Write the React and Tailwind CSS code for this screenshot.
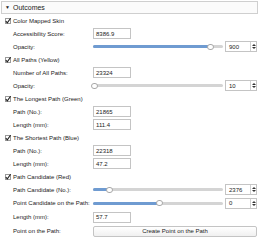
import React from 'react';

const font = { fontFamily: '"Liberation Sans", Arial, sans-serif' };

const Check = ({ label }) => (
  <div className="flex h-[13px] items-center pl-[5px]">
    <span className="flex h-[6px] w-[6px] items-center justify-center border border-[#9a9a9a] bg-white">
      <svg width="6" height="6" viewBox="0 0 6 6" className="overflow-visible">
        <path d="M0.8 3.2 L2.3 4.8 L5.6 0.2" fill="none" stroke="#222" strokeWidth="1.1" />
      </svg>
    </span>
    <span className="ml-[2px] whitespace-nowrap">{label}</span>
  </div>
);

const Row = ({ label, tall, children }) => (
  <div className={`flex items-center pl-[13px] pr-[2px] ${tall ? 'h-[14px]' : 'h-[13px]'}`}>
    <div className="w-[80px] shrink-0 whitespace-nowrap">{label}</div>
    {children}
  </div>
);

const Field = ({ value }) => (
  <div className="flex h-[11px] w-[38px] items-center border border-[#c4c4c4] bg-white px-[2px]">{value}</div>
);

const Slider = ({ pct }) => (
  <div className="relative flex h-[11px] w-[130px] items-center">
    <div className="h-[3px] w-full overflow-hidden rounded-full bg-[#d4d4d4]">
      <div className="h-full bg-[#6f9bd1]" style={{ width: `${pct}%` }} />
    </div>
    <div
      className="absolute top-[2.5px] h-[6px] w-[7px] rounded-full border border-[#a8a8a8] bg-white"
      style={{ left: `calc(${pct}% - 3px)` }}
    />
  </div>
);

const Spin = ({ value }) => (
  <div className="ml-[2px] flex h-[11px] w-[32px] items-center border border-[#c4c4c4] bg-white">
    <span className="flex-1 pl-[3px]">{value}</span>
    <span className="flex h-full w-[6px] flex-col items-center justify-center gap-[1px] border-l border-[#d0d0d0]">
      <svg width="4" height="2" viewBox="0 0 4 2"><path d="M0 2 L2 0 L4 2 Z" fill="#333" /></svg>
      <svg width="4" height="2" viewBox="0 0 4 2"><path d="M0 0 L2 2 L4 0 Z" fill="#333" /></svg>
    </span>
  </div>
);

export default function App() {
  return (
    <div className="h-[240px] w-[259px] overflow-hidden bg-white text-[6px] leading-none text-[#222]" style={font}>
      <div className="mx-[1px] mt-[1px] flex h-[13px] items-center border border-[#cfcfcf] bg-[#fbfbfb] pl-[3px] text-[7px]">
        <span className="text-[5px]">▼</span>
        <span className="ml-[3px]">Outcomes</span>
      </div>

      <Check label="Color Mapped Skin" />
      <Row label="Accessibility Score:"><Field value="8386.9" /></Row>
      <Row label="Opacity:"><Slider pct={90} /><Spin value="900" /></Row>

      <Check label="All Paths (Yellow)" />
      <Row label="Number of All Paths:"><Field value="23324" /></Row>
      <Row label="Opacity:"><Slider pct={1} /><Spin value="10" /></Row>

      <Check label="The Longest Path (Green)" />
      <Row label="Path (No.):"><Field value="21865" /></Row>
      <Row label="Length (mm):"><Field value="111.4" /></Row>

      <Check label="The Shortest Path (Blue)" />
      <Row label="Path (No.):"><Field value="22318" /></Row>
      <Row label="Length (mm):"><Field value="47.2" /></Row>

      <Check label="Path Candidate (Red)" />
      <Row label="Path Candidate (No.):"><Slider pct={12} /><Spin value="2376" /></Row>
      <Row label="Point Candidate on the Path:" tall><Slider pct={51} /><Spin value="0" /></Row>
      <Row label="Length (mm):" tall><Field value="57.7" /></Row>
      <Row label="Point on the Path:" tall>
        <button className="flex h-[11px] w-[164px] items-center justify-center rounded-[2px] border border-[#c4c4c4] bg-gradient-to-b from-white to-[#f0f0f0]">
          Create Point on the Path
        </button>
      </Row>
    </div>
  );
}
